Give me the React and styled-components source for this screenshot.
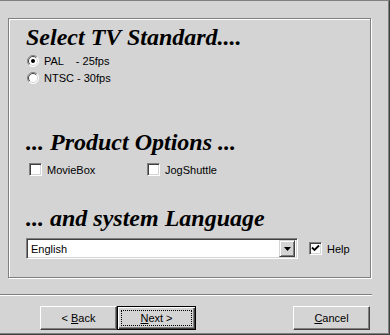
import React from "react";
import styled, { createGlobalStyle } from "styled-components";

const GlobalStyle = createGlobalStyle`
  html, body {
    margin: 0;
    padding: 0;
    background: #d4d4d4;
  }
  * {
    box-sizing: border-box;
  }
`;

const Dialog = styled.div`
  width: 390px;
  height: 335px;
  background: #d4d4d4;
  border-top: 1px solid #808080;
  border-right: 1px solid #404040;
  border-bottom: 1px solid #404040;
  box-shadow: inset -1px -1px 0 #808080;
  font-family: "Liberation Sans", Arial, sans-serif;
  font-size: 11px;
  color: #000;
  display: flex;
  flex-direction: column;
`;

const Frame = styled.div`
  margin: 17px 0 0 8px;
  width: 363px;
  height: 260px;
  border: 1px solid #808080;
  box-shadow: inset 1px 1px 0 #fff, 1px 1px 0 #fff;
  padding: 0 0 0 17px;
  display: flex;
  flex-direction: column;
`;

const Heading = styled.h2`
  margin: ${(p) => p.$top}px 0 0 0;
  font-family: "Liberation Serif", "Times New Roman", serif;
  font-style: italic;
  font-weight: bold;
  font-size: 24px;
  line-height: 24px;
  white-space: pre;
`;

const Row = styled.div`
  display: flex;
  align-items: center;
  height: ${(p) => p.$height || 17}px;
  margin-top: ${(p) => p.$top || 0}px;
`;

const Option = styled.label`
  display: flex;
  align-items: center;
  gap: ${(p) => p.$gap || 5}px;
  width: ${(p) => (p.$width ? p.$width + "px" : "auto")};
  margin-left: ${(p) => p.$left || 0}px;
  white-space: pre;
`;

const Box = styled.span`
  width: 13px;
  height: 13px;
  background: #fff;
  border-top: 1px solid #808080;
  border-left: 1px solid #808080;
  border-right: 1px solid #fff;
  border-bottom: 1px solid #fff;
  box-shadow: inset 1px 1px 0 #404040, inset -1px -1px 0 #d4d4d4;
  display: flex;
  align-items: center;
  justify-content: center;
  flex: none;
`;

const Combo = styled.div`
  width: 272px;
  height: 21px;
  background: #fff;
  border-top: 1px solid #808080;
  border-left: 1px solid #808080;
  border-right: 1px solid #fff;
  border-bottom: 1px solid #fff;
  box-shadow: inset 1px 1px 0 #404040, inset -1px -1px 0 #d4d4d4;
  display: flex;
  align-items: center;
  padding: 2px;
`;

const ComboText = styled.span`
  flex: 1;
  padding-left: 2px;
`;

const ArrowButton = styled.span`
  width: 16px;
  height: 17px;
  background: #d4d4d4;
  border-top: 1px solid #d4d4d4;
  border-left: 1px solid #d4d4d4;
  border-right: 1px solid #404040;
  border-bottom: 1px solid #404040;
  box-shadow: inset 1px 1px 0 #fff, inset -1px -1px 0 #808080;
  display: flex;
  align-items: center;
  justify-content: center;
`;

const Separator = styled.div`
  margin-top: 16px;
  width: 372px;
  height: 2px;
  border-top: 1px solid #808080;
  border-bottom: 1px solid #fff;
`;

const ButtonBar = styled.div`
  display: flex;
  margin-top: 10px;
  padding-left: 40px;
`;

const Button = styled.button`
  width: ${(p) => (p.$default ? 79 : 77)}px;
  height: 24px;
  margin-left: ${(p) => p.$left || 0}px;
  padding: 0;
  background: #d4d4d4;
  font-family: "Liberation Sans", Arial, sans-serif;
  font-size: 11px;
  color: #000;
  border: 1px solid;
  border-top-color: ${(p) => (p.$default ? "#000" : "#fff")};
  border-left-color: ${(p) => (p.$default ? "#000" : "#fff")};
  border-right-color: ${(p) => (p.$default ? "#000" : "#404040")};
  border-bottom-color: ${(p) => (p.$default ? "#000" : "#404040")};
  box-shadow: ${(p) =>
    p.$default
      ? "inset 1px 1px 0 #fff, inset -1px -1px 0 #404040, inset -2px -2px 0 #808080"
      : "inset -1px -1px 0 #808080"};
  display: flex;
  align-items: center;
  justify-content: center;
`;

const Caption = styled.span`
  white-space: pre;
`;

const Focus = styled.span`
  border: 1px dotted #000;
  width: 71px;
  height: 16px;
  display: flex;
  align-items: center;
  justify-content: center;
  white-space: pre;
`;

const Key = styled.span`
  text-decoration: underline;
`;

function Radio({ checked }) {
  return (
    <svg width="12" height="12" viewBox="0 0 12 12" style={{ flex: "none" }}>
      <circle cx="6" cy="6" r="5.5" fill="#fff" />
      <path d="M2.1 9.9 A5.5 5.5 0 0 1 9.9 2.1" fill="none" stroke="#808080" />
      <path d="M9.9 2.1 A5.5 5.5 0 0 1 2.1 9.9" fill="none" stroke="#fff" />
      <path d="M2.8 9.2 A4.5 4.5 0 0 1 9.2 2.8" fill="none" stroke="#404040" />
      <path d="M9.2 2.8 A4.5 4.5 0 0 1 2.8 9.2" fill="none" stroke="#d4d4d4" />
      {checked && <circle cx="6" cy="6" r="2" fill="#000" />}
    </svg>
  );
}

function Check({ checked }) {
  return (
    <Box>
      {checked && (
        <svg width="9" height="9" viewBox="0 0 9 9">
          <path d="M1 3.5 L3.5 6 L8 1.5" fill="none" stroke="#000" strokeWidth="1.8" />
        </svg>
      )}
    </Box>
  );
}

export default function App() {
  return (
    <>
      <GlobalStyle />
      <Dialog>
        <Frame>
          <Heading $top={6}>Select TV Standard....</Heading>
          <Row $top={3}>
            <Option $left={1}>
              <Radio checked />
              {"PAL    - 25fps"}
            </Option>
          </Row>
          <Row>
            <Option $left={1}>
              <Radio />
              NTSC - 30fps
            </Option>
          </Row>
          <Heading $top={44}>... Product Options ...</Heading>
          <Row $top={7}>
            <Option $left={3} $width={118}>
              <Check />
              MovieBox
            </Option>
            <Option>
              <Check />
              JogShuttle
            </Option>
          </Row>
          <Heading $top={28}>... and system Language</Heading>
          <Row $top={8} $height={21}>
            <Combo>
              <ComboText>English</ComboText>
              <ArrowButton>
                <svg width="7" height="4" viewBox="0 0 7 4">
                  <path d="M0 0 H7 L3.5 4 Z" fill="#000" />
                </svg>
              </ArrowButton>
            </Combo>
            <Option $left={11}>
              <Check checked />
              Help
            </Option>
          </Row>
        </Frame>
        <Separator />
        <ButtonBar>
          <Button>
            <Caption>
              {"< "}
              <Key>B</Key>ack
            </Caption>
          </Button>
          <Button $default>
            <Focus>
              <Key>N</Key>
              {"ext >"}
            </Focus>
          </Button>
          <Button $left={97}>
            <Caption>
              <Key>C</Key>ancel
            </Caption>
          </Button>
        </ButtonBar>
      </Dialog>
    </>
  );
}
